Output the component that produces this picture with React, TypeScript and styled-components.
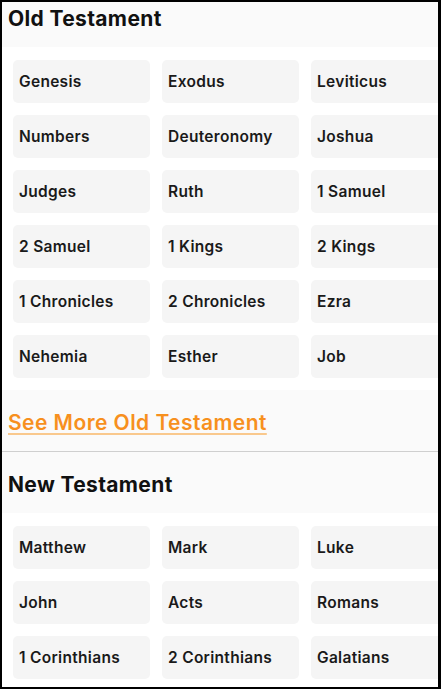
import React from "react";
import styled, { createGlobalStyle } from "styled-components";

const Global = createGlobalStyle`
  html, body { margin: 0; padding: 0; background: #ffffff; }
  body { font-family: Inter, "Open Sans", Arial, sans-serif; }
`;

const Frame = styled.div`
  box-sizing: border-box;
  width: 441px;
  height: 689px;
  border: 2px solid #000;
  border-right-width: 3px;
  overflow: hidden;
  background: #fff;
`;

const Scroller = styled.div`
  display: flex;
  flex-direction: column;
  margin-top: -17px;
`;

const SectionHeader = styled.div<{ $divider?: boolean }>`
  height: 62px;
  box-sizing: border-box;
  display: flex;
  align-items: center;
  padding-left: 6px;
  background: #fafafa;
  border-top: ${(p) => (p.$divider ? "1px solid #cfcfcf" : "none")};
`;

const Title = styled.h2`
  margin: 0;
  font-size: 21px;
  font-weight: 700;
  color: #111;
  letter-spacing: 0.35px;
  padding-top: 4px;
`;

const Grid = styled.div`
  display: grid;
  grid-template-columns: repeat(3, 137px);
  grid-auto-rows: 43px;
  gap: 12px;
  padding: 13px 0 12px 11px;
`;

const BookCard = styled.div`
  display: flex;
  align-items: center;
  padding-left: 6px;
  border-radius: 5px;
  background: #f5f5f5;
  font-size: 15.5px;
  font-weight: 600;
  letter-spacing: 0.3px;
  color: #1a1a1a;
  white-space: nowrap;
`;

const MoreRow = styled.div`
  height: 61px;
  display: flex;
  align-items: center;
  padding-left: 6px;
  background: #fafafa;
`;

const MoreLink = styled.a`
  font-size: 21px;
  font-weight: 600;
  letter-spacing: 0.45px;
  color: #f7901e;
  text-decoration: underline;
  text-decoration-color: #f9c88d;
  text-decoration-thickness: 2px;
  text-underline-offset: 3px;
  padding-top: 3px;
`;

const oldBooks = [
  "Genesis", "Exodus", "Leviticus",
  "Numbers", "Deuteronomy", "Joshua",
  "Judges", "Ruth", "1 Samuel",
  "2 Samuel", "1 Kings", "2 Kings",
  "1 Chronicles", "2 Chronicles", "Ezra",
  "Nehemia", "Esther", "Job",
];

const newBooks = [
  "Matthew", "Mark", "Luke",
  "John", "Acts", "Romans",
  "1 Corinthians", "2 Corinthians", "Galatians",
];

export default function App() {
  return (
    <>
      <Global />
      <Frame>
        <Scroller>
          <SectionHeader>
            <Title>Old Testament</Title>
          </SectionHeader>
          <Grid>
            {oldBooks.map((b) => (
              <BookCard key={b}>{b}</BookCard>
            ))}
          </Grid>
          <MoreRow>
            <MoreLink>See More Old Testament</MoreLink>
          </MoreRow>
          <SectionHeader $divider>
            <Title>New Testament</Title>
          </SectionHeader>
          <Grid>
            {newBooks.map((b) => (
              <BookCard key={b}>{b}</BookCard>
            ))}
          </Grid>
        </Scroller>
      </Frame>
    </>
  );
}
